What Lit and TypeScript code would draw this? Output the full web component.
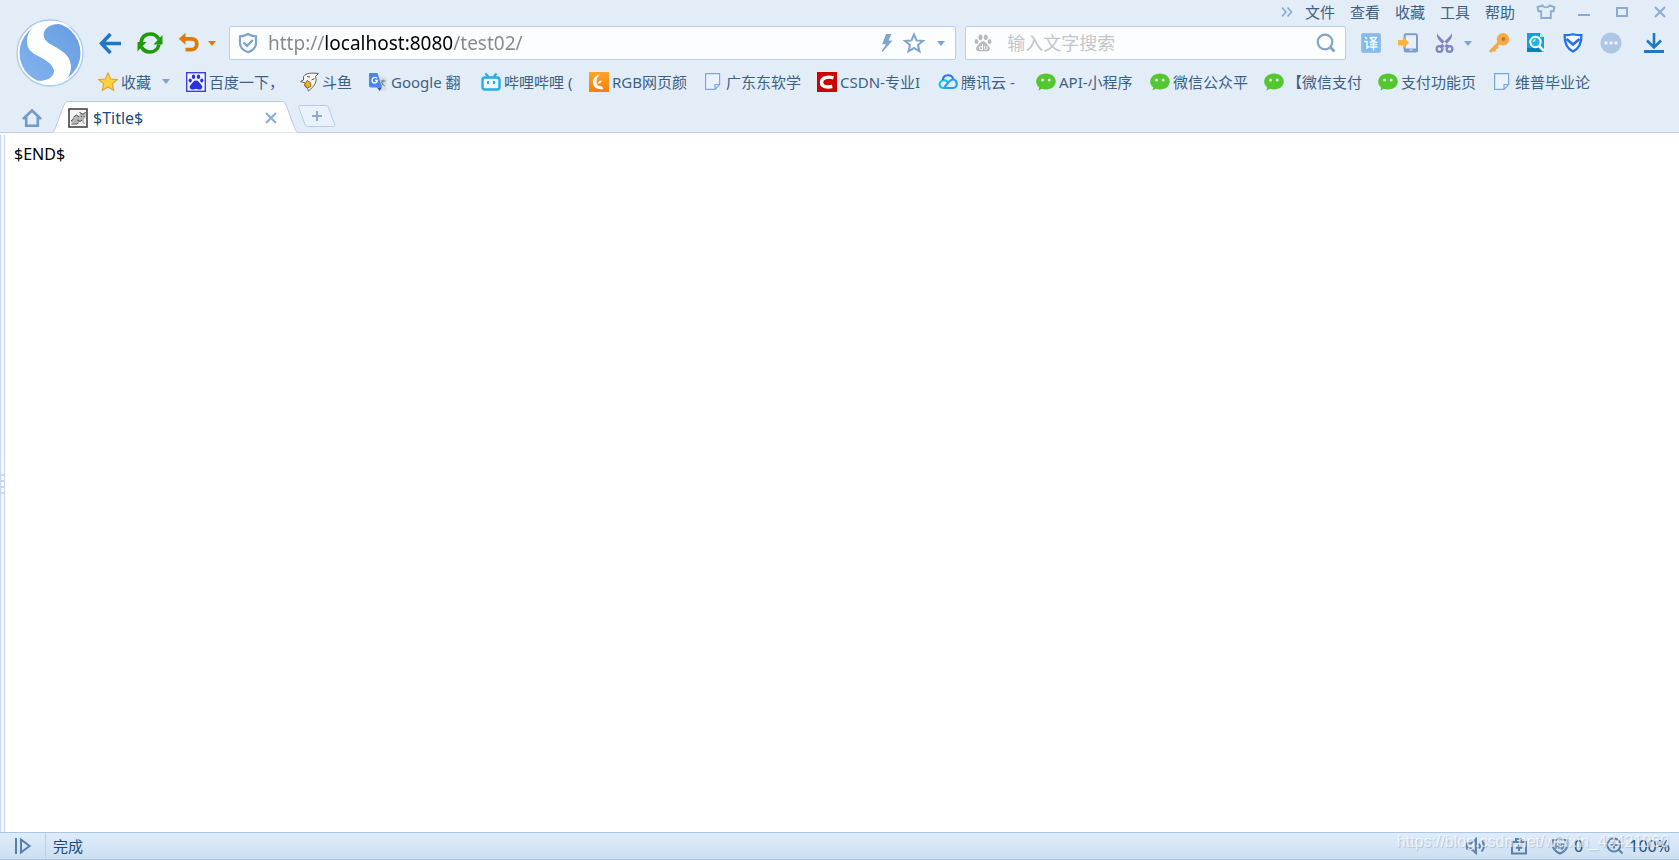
import { LitElement, html, css, svg, TemplateResult } from "lit";
import { customElement, property, state } from "lit/decorators.js";

type Glyph = { w: number; h: number; body: TemplateResult };

const wechat: Glyph = {
  w: 20, h: 20,
  body: svg`<path fill="#52c72f" d="M10 1.500c5.500 0 9.800 3.600 9.800 8s-4.300 8-9.800 8c-1.600 0-3-.3-4.300-.8L2.500 18.800l.8-3.300C1.300 14 .2 11.900.2 9.500c0-4.400 4.300-8 9.800-8z"/><circle cx="6.600" cy="8" r="1.500" fill="#e6f6df"/><circle cx="13.200" cy="8" r="1.500" fill="#e6f6df"/>`,
};
const sheet: Glyph = {
  w: 20, h: 20,
  body: svg`<path fill="#eaf2fd" stroke="#7aa7e8" stroke-width="1.200" d="M2.600 1.600h14v11l-4.500 4.800H2.600zM16.600 12.500H12v4.900"/>`,
};

const icons: Record<string, Glyph> = {
  wechat,
  sheet,
  logo: {
    w: 68, h: 68,
    body: svg`<defs><linearGradient id="disc" x1="0" y1="1" x2="1" y2="0"><stop offset="0" stop-color="#83b4ee"/><stop offset="1" stop-color="#669de2"/></linearGradient></defs>
      <circle cx="34" cy="34" r="33" fill="#fff" stroke="#aac9ef" stroke-width="1.300"/>
      <circle cx="34" cy="34" r="30.500" fill="url(#disc)"/>
      <path fill="#fff" d="M34 1.800C45 1.800 52 5 56 9C48 4 38 4 32 8C25 13 27 21 34 25C45 31 55 36 55 48C55 56 50 61 47 62.500C41 66 29 67 19 61.500C27 63 38 60 38 52C37 45 30 41 22 37C14 33 11 29 11 22C11 12 19 5 25 4Z"/>`,
  },
  back: { w: 24, h: 24, body: svg`<path fill="none" stroke="#2078c4" stroke-width="3.600" d="M23 12.500H4M12.500 3L3.500 12.500L12.500 22"/>` },
  refresh: {
    w: 26, h: 24,
    body: svg`<g fill="none" stroke="#1f9b0a" stroke-width="3.600"><path d="M4 11C5 5.500 9 3 13.500 3c4 0 6.500 2 8.200 5"/><path d="M22 13.500C21 18.500 17 21 12.700 21c-4 0-6.500-2-8.200-5"/></g><path fill="#1f9b0a" d="M25.500 4v9.500h-9zM.5 20.500V11h9z"/>`,
  },
  undo: { w: 22, h: 22, body: svg`<path fill="none" stroke="#dc7c05" stroke-width="3.800" d="M4 6.800h9.500c3.200 0 5.300 2 5.300 5.200s-2.100 5.700-5.300 5.700H7.500"/><path fill="#dc7c05" d="M7.500.8V12.800L.8 6.800z"/>` },
  downOrange: { w: 8, h: 5, body: svg`<path fill="#dc7c05" d="M0 0h8L4 5z"/>` },
  down: { w: 8, h: 5, body: svg`<path fill="#7fa5cf" d="M0 0h8L4 5z"/>` },
  guard: { w: 20, h: 22, body: svg`<path fill="none" stroke="#7fa3cb" stroke-width="2.200" d="M10 2C7.500 3.700 5 4.200 2 4.300V11c0 5 4 7.800 8 9.300 4-1.500 8-4.300 8-9.300V4.300C15 4.200 12.500 3.700 10 2z"/><path fill="none" stroke="#7fa3cb" stroke-width="2.400" d="M5.500 10.500l3.500 3.300L14.800 8"/>` },
  bolt: { w: 12, h: 20, body: svg`<path fill="#7fa5cf" d="M5 1H10.500L7.500 7.500H11.500L1.500 19L.5 18.500L5 11.200H1.200z"/>` },
  starLine: { w: 22, h: 22, body: svg`<path fill="none" stroke="#7fa5cf" stroke-width="2" d="M11 2.500l2.500 5.900 6.400.5-4.900 4.200 1.500 6.300L11 16l-5.500 3.400L7 13.100 2.100 8.900l6.400-.5z"/>` },
  pawGrey: {
    w: 18, h: 20,
    body: svg`<g fill="#b9babb"><ellipse cx="6.500" cy="4.200" rx="2" ry="2.800"/><ellipse cx="11.800" cy="4.200" rx="2" ry="2.800"/><ellipse cx="2.500" cy="8.600" rx="1.900" ry="2.500"/><ellipse cx="15.600" cy="8.600" rx="1.900" ry="2.500"/><path d="M9 8.200c2.700 0 3.200 2.500 5.200 4.200 3 2.500 1.800 5.800-1.200 5.800H5c-3 0-4.200-3.300-1.200-5.800C5.800 10.700 6.300 8.200 9 8.200z"/></g><path fill="none" stroke="#fff" d="M8.500 11v5.500H6.400c-1.400 0-1.400-2.800 0-2.800H8.500M10.500 13.200v2.300c0 1.300 2.500 1.300 2.500 0v-2.300"/>`,
  },
  find: { w: 20, h: 20, body: svg`<circle cx="9" cy="9" r="7.300" fill="none" stroke="#7fa5cf" stroke-width="2.200"/><path stroke="#7fa5cf" stroke-width="2.800" d="M14 14l4.500 4.500"/>` },
  translate: {
    w: 20, h: 20,
    body: svg`<rect x=".7" y=".7" width="18.600" height="18.600" rx="1.500" fill="#78bdf3" stroke="#a4bcd9" stroke-width="1.400"/><path fill="none" stroke="#f2faff" stroke-width="1.500" d="M4 4l2 2M3 8.500h3V15l2-1.500M8.500 4.500h7c-1.500 3-4 4.500-7 5M9.500 5c1.500 2.500 3.500 4 7 4.500M9 11.500h7M8.500 14h8M12.500 9v8.500"/>`,
  },
  phoneIn: { w: 20, h: 20, body: svg`<rect x="6.700" y="1.200" width="12.300" height="17.300" rx="1.300" fill="#e6effa" stroke="#7c9bcf" stroke-width="2"/><path fill="#7c9bcf" d="M6 15.500h13.500V19H6z"/><path fill="#e6effa" d="M11.500 16.500h3v1h-3z"/><path fill="#fbb53e" d="M0 7h5V3.800l6 6-6 6V12.500H0z"/>` },
  scissors: {
    w: 20, h: 20,
    body: svg`<path fill="#7f86c5" d="M2 .5C1.500 4 3 6.500 7 10.500L12.500 16 14.500 13.500 10 9C6.500 5.500 4 3 2 .5zM17 .5C17.500 4 16 6.500 12 10.500L6.500 16 4.500 13.500 9 9C12.500 5.500 15 3 17 .5z"/><g fill="none" stroke="#7f86c5" stroke-width="2.200"><circle cx="4.500" cy="16" r="2.900"/><circle cx="14.500" cy="16" r="2.900"/></g>`,
  },
  key: { w: 20, h: 20, body: svg`<path stroke="#f3a944" stroke-width="3.200" d="M1 19L12 8"/><path stroke="#f3a944" stroke-width="2.500" d="M4 15.500l2.500 2.500M6.500 13l2.500 2.500"/><circle cx="14" cy="6.300" r="6.200" fill="#f3a944"/><circle cx="14.500" cy="6" r="2" fill="#bd7a2a"/>` },
  pageFind: { w: 20, h: 20, body: svg`<path fill="#12a0d8" d="M1 0h13l4 4v15H1z"/><path fill="#087fc0" d="M1 15h17v4H1z"/><path fill="#bcecfa" d="M14 0l4 4h-4z"/><circle cx="9.500" cy="9" r="5.200" fill="#26b2e2" stroke="#fff" stroke-width="2"/><path stroke="#fff" stroke-width="2.600" d="M13 13l5 5"/><path fill="none" stroke="#d8f6ff" stroke-width="1.400" d="M7.500 9a2.200 2.200 0 0 1 2.200-2.200"/>` },
  shieldBlue: { w: 20, h: 20, body: svg`<path fill="#f4faff" stroke="#226ff5" stroke-width="2.200" d="M10 1.300C7 2 4 2.200 1.600 2.200c-.2 7 1.900 13 8.400 16.200 6.500-3.200 8.600-9.200 8.400-16.200C16 2.200 13 2 10 1.300z"/><path fill="none" stroke="#226ff5" stroke-width="2.600" d="M3.500 6l6.500 5.500L16.500 6"/>` },
  more: { w: 22, h: 22, body: svg`<circle cx="11" cy="11" r="10.500" fill="#aec5e3"/><path fill="#edf4fc" d="M4.500 9.500h3v3h-3zM9.500 9.500h3v3h-3zM14.500 9.500h3v3h-3z"/>` },
  download: { w: 20, h: 22, body: svg`<path fill="none" stroke="#2078c4" stroke-width="2.600" d="M10 1v14M3 8.500l7 7 7-7"/><path fill="#2078c4" d="M0 18h20v3H0z"/>` },
  shirt: { w: 20, h: 16, body: svg`<path fill="none" stroke="#8aabd3" stroke-width="1.900" d="M6.500 1.500L1.500 3.200 2.500 7.300H5.200V14h9.600V7.300h2.700L18.500 3.200 13.500 1.500C12.500 4 7.500 4 6.500 1.500z"/>` },
  minimise: { w: 12, h: 12, body: svg`<path fill="#8aabd3" d="M0 8h12v2H0z"/>` },
  maximise: { w: 12, h: 12, body: svg`<rect x="1" y="2" width="10" height="8" fill="none" stroke="#8aabd3" stroke-width="2"/>` },
  close: { w: 12, h: 12, body: svg`<path stroke="#8aabd3" stroke-width="2" d="M1 1l10 10M11 1L1 11"/>` },
  chevrons: { w: 12, h: 12, body: svg`<path fill="none" stroke="#86a6cf" stroke-width="1.500" d="M1 1.500L5 6 1 10.500M6.500 1.500l4 4.500-4 4.500"/>` },
  star: { w: 20, h: 20, body: svg`<path fill="#ffd23f" stroke="#dfa22c" stroke-width="1.100" d="M10 1l2.700 6 6.500.6-4.900 4.300 1.500 6.400L10 15l-5.800 3.300 1.500-6.400L.8 7.600 7.300 7z"/>` },
  baidu: {
    w: 20, h: 20,
    body: svg`<rect x=".7" y=".7" width="18.600" height="18.600" fill="#f3f4ff" stroke="#3c41de" stroke-width="1.400"/><g fill="#2a32e0"><ellipse cx="7.500" cy="4.800" rx="1.700" ry="2.300"/><ellipse cx="12.500" cy="4.800" rx="1.700" ry="2.300"/><ellipse cx="4.200" cy="8.500" rx="1.600" ry="2.100"/><ellipse cx="15.800" cy="8.500" rx="1.600" ry="2.100"/><path d="M10 8.500c2.500 0 3 2 5 4 2.500 2.500 1 5-1.500 5-1.500 0-2-.5-3.500-.5s-2 .5-3.500.5c-2.500 0-4-2.500-1.500-5 2-2 2.500-4 5-4z"/></g>`,
  },
  douyu: {
    w: 20, h: 20,
    body: svg`<path fill="#f7f5f0" stroke="#65605d" stroke-width="1" d="M4.500 4.500C7 .8 13 .8 19.500 1.500l-3 3c2 5-1 9.500-7 14.500-.5-2-1.500-3.500-4-5l1-3-5-1.500 3-1.500z"/><path fill="#f1b11f" stroke="#7a5b22" stroke-width=".8" d="M8 8.500l3.500 2 .5 4L8.500 16l-3-3z"/><path fill="none" stroke="#5c5654" d="M8 4.500l3 .5M12.500 8l3-1.500"/>`,
  },
  google: {
    w: 20, h: 20,
    body: svg`<path fill="#dcdfe4" d="M9 5h9.500v14H12z"/><path fill="#4a86f0" d="M2 1h7.500l4.500 14.500H3.500C2 15.500 1 15 1 13.500V2.500C1 1.500 1.300 1 2 1z"/><path fill="#2c53b8" d="M9 15.500h5l-2.500 3.500z"/><path fill="none" stroke="#fff" stroke-width="1.300" d="M9 6.300C7 4.500 4 5.800 4 8.300c0 3.500 5.200 3.700 5.300 0H7"/><path fill="none" stroke="#6d7785" d="M12.500 9h5M15 7.500V9c0 2-1 4-1.500 4.500M13.500 10c.5 2 2 3.500 3.500 4"/>`,
  },
  bili: { w: 20, h: 20, body: svg`<path stroke="#22aee8" stroke-width="2.200" d="M4.500 1.500l3 3.500M15.500 1.500l-3 3.500"/><rect x="1.500" y="5.500" width="17" height="12" rx="2.500" fill="#eff9ff" stroke="#22aee8" stroke-width="2.400"/><path fill="#22aee8" d="M6 9h2v3H6zM12 9h2v3h-2z"/>` },
  rgb: { w: 20, h: 20, body: svg`<defs><linearGradient id="amber" x2="0" y2="1"><stop offset="0" stop-color="#ffa52a"/><stop offset="1" stop-color="#f77e06"/></linearGradient></defs><path fill="url(#amber)" d="M0 0h20v20H0z"/><path fill="#fff" d="M10.500 2.500C5.500 4 3.500 7.500 4 11c.5 4.500 5 7 10.500 6-.5-1.200-1-2-2-2.800-3 .3-4.800-1.200-5-3.700C7.300 7.500 8.500 5 10.500 2.500z"/><path fill="#fff" d="M8.500 11.200c2.500.8 4-.5 4.200-3l-2 .8z"/>` },
  csdn: { w: 20, h: 20, body: svg`<path fill="#cb0303" d="M0 0h20v20H0z"/><path fill="none" stroke="#fff" stroke-width="3.400" d="M16.500 5.800C11 4.300 4.500 5.500 4.500 10.500c0 4.500 5.500 5 10.800 4"/>` },
  tencent: { w: 20, h: 20, body: svg`<g fill="none" stroke-width="2.100"><path stroke="#18c6d8" d="M10.500 10.500C8 8 5.500 7.500 3.500 9c-3.500 2.500-1.500 7 2 7h3"/><path stroke="#2378f0" d="M4.800 8c.5-6 9.200-6.500 10.400-.8"/><path stroke="#2e9cf7" d="M5.500 16H15c5-.5 5-7.500.5-8.500-3.500-.5-4.500 2.500-9 7.500"/></g>` },
  home: { w: 20, h: 20, body: svg`<path fill="none" stroke="#7299c9" stroke-width="2.600" d="M1 11L10 2.500 19 11M4.200 9v8.700h11.600V9"/>` },
  favicon: {
    w: 20, h: 20,
    body: svg`<rect x="1" y="1" width="18" height="18" fill="#f5f5f5" stroke="#444" stroke-width="1.600"/><path fill="#b5b5b5" d="M2.500 14l3-5 4-2 2 1 .5-4 2 1.500h2L18 4l-.5 5-2 3 1.500 4h-2l-1-3-3 1-3 2z"/><path fill="none" stroke="#4b4b4b" d="M3 13l2.500-2M5.500 9l3-2 2.500 2M11.500 4l2 2h2L17.500 4M13 8.500h1M15.500 8.500h1M9 12l3 1.500 2-1.500M3.500 16h5l2-1"/>`,
  },
  plus: { w: 12, h: 12, body: svg`<path stroke="#8aabd3" stroke-width="2" d="M6 1v10M1 6h10"/>` },
  panel: { w: 18, h: 18, body: svg`<path fill="none" stroke="#587fab" stroke-width="2" d="M2 1v16M7 2.500v13L15.500 9z"/>` },
  sound: { w: 22, h: 18, body: svg`<path fill="none" stroke="#5b80a9" stroke-width="2" d="M2 6.500h4L11 2v14l-5-4.500H2zM14 6.500c1.200 1.500 1.200 3.500 0 5M16.500 3.500c3.300 3 3.300 8 0 11"/>` },
  toolbox: { w: 18, h: 18, body: svg`<path fill="none" stroke="#5b80a9" stroke-width="2" d="M2 5h14v11.500H2zM6 5V2h5v3M9 7.500v6.500M5.800 10.800h6.400"/>` },
  adShield: { w: 18, h: 18, body: svg`<path fill="none" stroke="#5b80a9" stroke-width="2" d="M9 1.500C7 2.800 4.500 3.300 1.800 3.300V8c0 4.500 3.500 7 7.200 8.500 3.700-1.500 7.200-4 7.200-8.500V3.300C13.500 3.300 11 2.800 9 1.500z"/><path fill="none" stroke="#5b80a9" stroke-width="1.300" d="M5 12V7.500C5 5.500 8 5.500 8 7.500V12M5 9.500h3M10.300 6v6c3 0 3-6 0-6z"/>` },
  zoom: { w: 18, h: 18, body: svg`<circle cx="8" cy="8" r="6.500" fill="none" stroke="#5b80a9" stroke-width="2"/><path stroke="#5b80a9" stroke-width="2" d="M8 4.500v7M4.500 8h7M12.500 12.500l4 4"/>` },
};

@customElement("ui-icon")
class UiIcon extends LitElement {
  static styles = css`
    :host { display: block; flex: none; }
    svg { display: block; }
  `;
  @property() name = "";
  render() {
    const g = icons[this.name];
    return html`<svg width=${g.w} height=${g.h} viewBox="0 0 ${g.w} ${g.h}" aria-hidden="true">${g.body}</svg>`;
  }
}

const menu = ["文件", "查看", "收藏", "工具", "帮助"];
const bookmarks = [
  { icon: "baidu", text: "百度一下，", width: 74 },
  { icon: "douyu", text: "斗鱼", width: 30 },
  { icon: "google", text: "Google 翻", width: 74 },
  { icon: "bili", text: "哔哩哔哩 (", width: 69 },
  { icon: "rgb", text: "RGB网页颜", width: 75 },
  { icon: "sheet", text: "广东东软学", width: 75 },
  { icon: "csdn", text: "CSDN-专业I", width: 82 },
  { icon: "tencent", text: "腾讯云 -", width: 59 },
  { icon: "wechat", text: "API-小程序", width: 75 },
  { icon: "wechat", text: "微信公众平", width: 75 },
  { icon: "wechat", text: "【微信支付", width: 75 },
  { icon: "wechat", text: "支付功能页", width: 75 },
  { icon: "sheet", text: "维普毕业论", width: 75 },
];

@customElement("app-root")
class AppRoot extends LitElement {
  static styles = css`
    :host {
      display: flex;
      flex-direction: column;
      min-height: 100vh;
      background: #fff;
      color: #3c6186;
      font: 15px/20px "Noto Sans", "Noto Sans CJK SC", sans-serif;
    }
    * { box-sizing: border-box; }
    button, input { font: inherit; color: inherit; background: none; border: 0; padding: 0; margin: 0; outline: 0; }
    button { display: flex; align-items: center; cursor: pointer; white-space: nowrap; }
    a { color: inherit; text-decoration: none; }
    .chrome { background: #e3edf8; border-bottom: 1px solid #bed0e8; }
    .top { display: flex; }
    .logo { flex: none; padding: 19px 14px 0 16px; align-items: flex-start; }
    .rows { flex: 1; min-width: 0; }
    .menubar { display: flex; justify-content: flex-end; align-items: center; gap: 15px; height: 26px; padding: 0 13px 2px 0; }
    .menubar .more { margin-right: -3px; }
    .window { display: flex; align-items: center; gap: 26px; margin-left: 6px; }
    .window .shirt { margin-right: -4px; }
    .bar { display: flex; align-items: center; height: 34px; padding-right: 15px; }
    .nav { display: flex; align-items: center; gap: 15px; width: 131px; flex: none; }
    .nav .drop { margin-left: -7px; }
    .field { display: flex; align-items: center; height: 34px; min-width: 0; background: #fcfdff; border: 1px solid #b9cee6; border-radius: 2px; }
    .url { flex: 196 1 0; padding: 0 8px; gap: 10px; }
    .url .drop { padding: 0 2px; }
    .search { flex: 100 1 0; margin-left: 9px; padding: 0 9px 0 8px; gap: 15px; }
    .field input { flex: 1; min-width: 0; height: 32px; font-size: 18px; line-height: 24px; }
    .field.url input {
      font-size: 19px;
      color: transparent;
      caret-color: #000;
      background: linear-gradient(90deg, #888 56px, #000 56px, #000 185px, #888 185px);
      -webkit-background-clip: text;
      background-clip: text;
    }
    .search input { color: #333; }
    .search input::placeholder { color: #c4c6c9; opacity: 1; }
    .tools { display: flex; align-items: center; gap: 17px; margin-left: 15px; flex: none; }
    .tools .drop { margin-left: -8px; }
    .tools .last { margin-left: 5px; }
    .marks { display: flex; align-items: center; gap: 16px; height: 41px; padding-top: 2px; overflow: hidden; }
    .mark { display: flex; align-items: center; gap: 3px; flex: none; }
    .mark .text { overflow: hidden; white-space: nowrap; }
    .fav { gap: 3px; }
    .fav .drop { margin-left: 8px; }
    .tabs { display: flex; align-items: flex-end; height: 31px; }
    .home { padding: 0 10px 4px 22px; }
    .tab { position: relative; display: flex; align-items: center; width: 246px; height: 32px; margin-bottom: -1px; padding: 2px 21px 0 16px; gap: 5px; color: #174d7c; }
    .tab .shape { position: absolute; inset: 0; }
    .tab > ui-icon, .tab > .name, .tab > button { position: relative; }
    .tab .name { flex: 1; font-size: 16px; }
    .plus { position: relative; width: 38px; height: 22px; margin-bottom: 5px; justify-content: center; }
    .plus .shape { position: absolute; inset: 0; }
    .plus ui-icon { position: relative; }
    .body { flex: 1; display: flex; }
    .splitter { display: flex; flex-direction: column; justify-content: center; width: 5px; margin-top: 2px; border: solid #c6d6ef; border-width: 0 1px; background: #f8fafd; }
    .grip { height: 20px; background: repeating-linear-gradient(#c6d6ef 0 2px, #f8fafd 2px 6px); }
    .page { flex: 1; padding: 10px 9px; color: #000; font-size: 16px; line-height: 22px; }
    .page p { margin: 0; }
    .status { position: relative; display: flex; align-items: center; height: 28px; border: solid #aec5e2; border-width: 1px 0; background: linear-gradient(#deecfc, #cddff2); color: #174d7c; }
    .status .panel { width: 46px; height: 26px; padding-left: 14px; border-right: 1px solid #b9cfe8; }
    .status .done { flex: 1; padding-left: 7px; }
    .extras { display: flex; align-items: center; gap: 23px; padding-right: 9px; font-size: 16px; }
    .pair { gap: 5px; }
    .watermark { position: absolute; right: 10px; top: -1px; font: 16px/20px "Liberation Sans", sans-serif; color: rgba(255, 255, 255, 0.7); text-shadow: 1px 1px 1px rgba(120, 140, 165, 0.4); pointer-events: none; }
  `;

  @state() private address = "http://localhost:8080/test02/";

  private tool(icon: string, label: string, cls = "") {
    return html`<button class=${cls} aria-label=${label}><ui-icon name=${icon}></ui-icon></button>`;
  }

  render() {
    return html`
      <header class="chrome">
        <div class="top">
          ${this.tool("logo", "浏览器", "logo")}
          <div class="rows">
            <div class="menubar">
              ${this.tool("chevrons", "更多", "more")}
              ${menu.map((m) => html`<button>${m}</button>`)}
              <div class="window">
                ${this.tool("shirt", "皮肤", "shirt")}
                ${this.tool("minimise", "最小化")}
                ${this.tool("maximise", "最大化")}
                ${this.tool("close", "关闭")}
              </div>
            </div>
            <div class="bar">
              <div class="nav">
                ${this.tool("back", "后退")}
                ${this.tool("refresh", "刷新")}
                ${this.tool("undo", "恢复")}
                ${this.tool("downOrange", "恢复列表", "drop")}
              </div>
              <div class="field url">
                <ui-icon name="guard"></ui-icon>
                <input type="text" aria-label="地址" .value=${this.address}
                  @change=${(e: Event) => (this.address = (e.target as HTMLInputElement).value)} />
                ${this.tool("bolt", "加速")}
                ${this.tool("starLine", "收藏本页")}
                ${this.tool("down", "历史", "drop")}
              </div>
              <div class="field search">
                <ui-icon name="pawGrey"></ui-icon>
                <input type="text" aria-label="搜索" placeholder="输入文字搜索" />
                ${this.tool("find", "搜索")}
              </div>
              <div class="tools">
                ${this.tool("translate", "翻译")}
                ${this.tool("phoneIn", "发送到手机")}
                ${this.tool("scissors", "截图")}
                ${this.tool("down", "截图选项", "drop")}
                ${this.tool("key", "密码")}
                ${this.tool("pageFind", "查找")}
                ${this.tool("shieldBlue", "安全")}
                ${this.tool("more", "扩展")}
                ${this.tool("download", "下载", "last")}
              </div>
            </div>
            <nav class="marks">
              <button class="fav"><ui-icon name="star"></ui-icon><span>收藏</span><ui-icon class="drop" name="down"></ui-icon></button>
              ${bookmarks.map((b) => html`<a class="mark" href="#"><ui-icon name=${b.icon}></ui-icon><span class="text" style="width:${b.width}px">${b.text}</span></a>`)}
            </nav>
          </div>
        </div>
        <div class="tabs">
          ${this.tool("home", "主页", "home")}
          <div class="tab">
            <svg class="shape" width="246" height="32" viewBox="0 0 246 32" aria-hidden="true">
              <path fill="#fff" stroke="#b5cae6" d="M-1 31.500C2 31.500 3 28 4 25.500L11.500 5C13 1.500 14 .5 17 .5H229C232 .5 233 1.500 234.500 5L242 25.500C243 28 244 31.500 247 31.500"/>
            </svg>
            <ui-icon name="favicon"></ui-icon>
            <span class="name">$Title$</span>
            ${this.tool("close", "关闭标签")}
          </div>
          <button class="plus" aria-label="新建标签">
            <svg class="shape" width="38" height="22" viewBox="0 0 38 22" aria-hidden="true">
              <path fill="#e9f1fb" stroke="#b9cde7" d="M2 .5H27C29 .5 30 1 30.700 3L36.500 19C37 20.500 37 21.500 35.500 21.500H10C8 21.500 7.500 21 7 19.500L.8 2.500C.5 1 1 .5 2 .5z"/>
            </svg>
            <ui-icon name="plus"></ui-icon>
          </button>
        </div>
      </header>
      <main class="body">
        <div class="splitter"><div class="grip"></div></div>
        <div class="page"><p>$END$</p></div>
      </main>
      <footer class="status">
        ${this.tool("panel", "侧边栏", "panel")}
        <span class="done">完成</span>
        <div class="extras">
          ${this.tool("sound", "声音")}
          ${this.tool("toolbox", "修复")}
          <button class="pair"><ui-icon name="adShield"></ui-icon>0</button>
          <button class="pair"><ui-icon name="zoom"></ui-icon>100%</button>
        </div>
        <span class="watermark">https://blog.csdn.net/weixin_43421060</span>
      </footer>
    `;
  }
}
